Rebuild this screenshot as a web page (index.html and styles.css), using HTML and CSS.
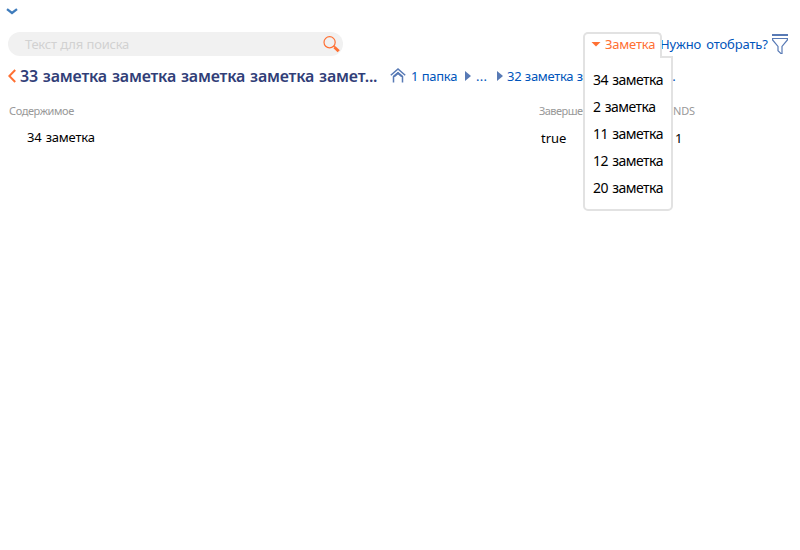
FILE: index.html
```html
<!DOCTYPE html>
<html lang="ru">
<head>
<meta charset="utf-8">
<title>Заметки</title>
<link rel="stylesheet" href="styles.css">
</head>
<body>
<div class="top">
  <svg width="12" height="7" viewBox="0 0 12 7"><path d="M1 1.2L6 5L11 1.2" fill="none" stroke="#3f7cbc" stroke-width="2.3"/></svg>
</div>
<div class="toolbar">
  <div class="search">
    <span class="placeholder">Текст для поиска</span>
    <svg width="17" height="17" viewBox="0 0 17 17"><circle cx="6.6" cy="6.3" r="5.6" fill="none" stroke="#ff7033" stroke-width="1.2"/><path d="M10.5 10L12 11.3" stroke="#ff7033" stroke-width="1.3"/><path d="M11.5 11.2L15.7 15.3" stroke="#ff7033" stroke-width="3"/></svg>
  </div>
  <div class="filter">
    <span class="need">Нужно отобрать?</span>
    <svg width="17" height="21" viewBox="0 0 17 21"><path d="M0 1H16" stroke="#587ab5" stroke-width="2"/><path d="M.6 4.5H15.4V6L10 12.4V19.5H8.8L6 16.8V12.4L.6 6Z" fill="none" stroke="#587ab5" stroke-width="1.2"/><path d="M0 4.5H16" stroke="#587ab5"/></svg>
  </div>
</div>
<div class="heading">
  <svg class="back" width="8" height="14" viewBox="0 0 8 14"><path d="M7.2 1L1.3 7L7.2 13" fill="none" stroke="#ff7033" stroke-width="2"/></svg>
  <h1 class="title">33 заметка заметка заметка заметка замет...</h1>
  <div class="crumbs">
    <svg class="home" width="16" height="16" viewBox="0 0 16 16"><path d="M.8 7.3L8 1L15.2 7.3M3.5 14.5V8.7L8 5L12.5 8.7V14.5" fill="none" stroke="#587ab5" stroke-width="1.5"/><path d="M4 8.5L8 5L12 8.5" fill="none" stroke="#587ab5" stroke-width="2"/></svg>
    <span class="crumb first">1 папка</span>
    <i class="arrow"></i>
    <span class="crumb dots">...</span>
    <i class="arrow"></i>
    <span class="crumb last">32 заметка з</span><span class="crumb">...</span>
  </div>
</div>
<div class="grid head"><span>Содержимое</span><span class="done">Завершено</span><span class="nds">NDS</span></div>
<div class="grid row"><span class="name">34 заметка</span><span class="bool">true</span><span class="count">1</span></div>
<div class="dropdown">
  <div class="tab"><i class="caret"></i><span>Заметка</span></div>
  <ul class="menu">
    <li>34 заметка</li>
    <li>2 заметка</li>
    <li>11 заметка</li>
    <li>12 заметка</li>
    <li>20 заметка</li>
  </ul>
</div>
</body>
</html>
```
FILE: styles.css
```css
* { box-sizing: border-box; }
body { margin: 0; width: 800px; height: 550px; overflow: hidden; background: #fff; font-family: "Noto Sans", sans-serif; font-size: 13px; color: #000; white-space: nowrap; }
svg { display: block; flex: none; }
.top { height: 32px; padding: 8px 0 0 6px; }
.toolbar { display: flex; justify-content: space-between; height: 24px; padding: 0 11px 0 8px; }
.search { display: flex; align-items: center; justify-content: space-between; width: 335px; height: 24px; padding: 0 3px 0 17px; border-radius: 12px; background: #f1f1f1; }
.placeholder { color: #d2d2d2; letter-spacing: -.25px; word-spacing: .5px; }
.filter { display: flex; align-items: center; color: #0055bb; }
.need { width: 112px; letter-spacing: -.15px; word-spacing: 2px; }
.heading { display: flex; align-items: center; height: 40px; padding-left: 8px; }
.back { width: 8px; margin-right: 4px; }
.title { width: 370px; margin: 0; color: #313e78; font-size: 16px; font-weight: 600; letter-spacing: -.2px; word-spacing: 1px; }
.crumbs { display: flex; align-items: center; color: #0055bb; }
.home { margin-right: 5px; }
.crumb { letter-spacing: -.3px; word-spacing: .5px; }
.first { width: 54px; }
.dots { width: 21px; padding-left: 1px; letter-spacing: .3px; }
.arrow { width: 6px; height: 10px; margin-right: 4px; background: #587ab5; clip-path: polygon(0 0, 100% 50%, 0 100%); }
.dots + .arrow { margin-left: 1px; }
.last { width: 159px; overflow: hidden; }
.grid { display: grid; grid-template-columns: 530px 134px 1fr; padding-left: 9px; align-items: center; }
.head { height: 28px; color: #999; font-size: 11px; letter-spacing: -.4px; }
.done { letter-spacing: -.55px; }
.nds { letter-spacing: -.2px; }
.row { height: 27px; }
.name { padding: 0 0 1px 18px; letter-spacing: -.2px; word-spacing: 1px; }
.bool { padding-left: 2px; }
.count { padding-left: 2px; }
.dropdown { position: absolute; left: 583px; top: 32px; width: 90px; }
.tab { position: relative; z-index: 1; display: flex; align-items: center; width: 79px; height: 26px; padding: 0 0 4px 6px; border: 2px solid #e2e2e2; border-bottom: 0; border-radius: 5px 5px 0 0; background: #fff; color: #ff7033; letter-spacing: -.2px; }
.caret { width: 10px; height: 5px; margin-right: 4px; background: #ff7033; clip-path: polygon(0 0, 100% 0, 50% 100%); }
.menu { width: 90px; height: 155px; margin: -2px 0 0; padding: 8px 0 0 8px; border: 2px solid #e2e2e2; border-radius: 0 0 5px 5px; background: #fff; list-style: none; font-size: 14px; letter-spacing: -.5px; word-spacing: 1px; }
.menu li { height: 27px; line-height: 27px; }
```
